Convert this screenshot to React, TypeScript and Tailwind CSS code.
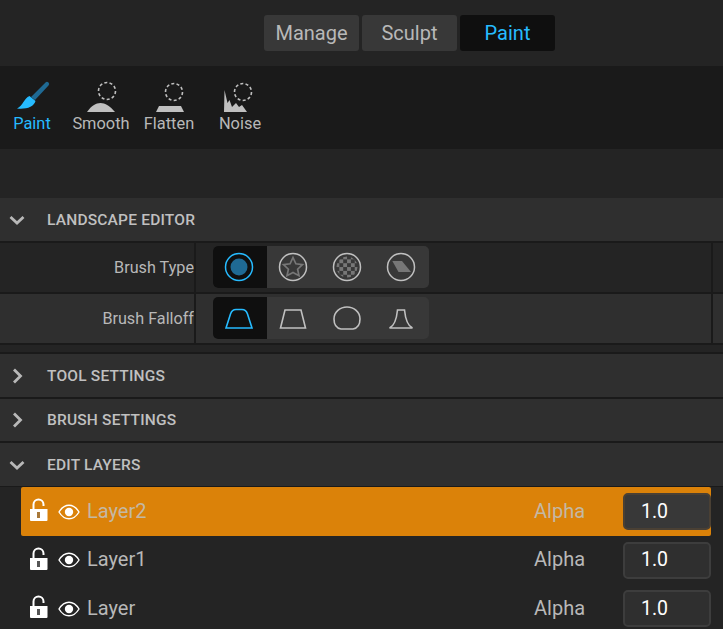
const FONT = "font-['Roboto',sans-serif]";

const Chevron = ({ open }: { open: boolean }) => (
  <svg width="16" height="16" viewBox="0 0 16 16" fill="none">
    <path
      d={open ? "M1.5 5 L8 11 L14.500 5" : "M5 1.500 L11.500 8 L5 14.500"}
      stroke="#b8b8b8"
      strokeWidth="2.8"
    />
  </svg>
);

const SectionHeader = ({ title, open, h }: { title: string; open: boolean; h: string }) => (
  <div className={`flex items-center bg-[#2f2f2f] pl-[9px] ${h}`}>
    <Chevron open={open} />
    <span className="ml-[22px] pt-[2px] text-[15.500px] font-medium tracking-[0.2px] text-[#c0c0c0]">{title}</span>
  </div>
);

const Dashed = ({ cx, cy }: { cx: number; cy: number }) => (
  <circle cx={cx} cy={cy} r="8.500" fill="none" stroke="#c0c0c0" strokeWidth="1.600" strokeDasharray="3 2.300" />
);

const ToolIcon = ({ name }: { name: string }) => {
  if (name === "Paint")
    return (
      <svg width="36" height="33" viewBox="0 0 36 33">
        <path d="M17 17 L31.500 2.500 A2 2 0 0 1 34.500 5.500 L21 20 Z" fill="#1f6a94" />
        <path d="M15.500 16 L21.500 21 C20 27 12 29.500 3 28.500 C9 26 10 18 15.500 16 Z" fill="#26bbff" />
      </svg>
    );
  if (name === "Smooth")
    return (
      <svg width="36" height="33" viewBox="0 0 36 33">
        <Dashed cx={24} cy={11} />
        <path d="M4 32 C8 26 13 23 17.500 23 C22 23 27 26 32 32 Z" fill="#c0c0c0" />
      </svg>
    );
  if (name === "Flatten")
    return (
      <svg width="36" height="33" viewBox="0 0 36 33">
        <Dashed cx={23} cy={12} />
        <path d="M8 26 H30 L33 32 H5 Z" fill="#c0c0c0" />
      </svg>
    );
  return (
    <svg width="36" height="33" viewBox="0 0 36 33">
      <Dashed cx={21} cy={12} />
      <path d="M2 32 L2.500 10 L5.500 23 L7.500 20 L10 27 L14 23 L17 27 L20 25 L25 32 Z" fill="#c0c0c0" />
    </svg>
  );
};

const tools = [
  { name: "Paint", w: "w-[64px]", active: true },
  { name: "Smooth", w: "w-[74px]", active: false },
  { name: "Flatten", w: "w-[62px]", active: false },
  { name: "Noise", w: "w-[80px]", active: false },
];

const Ring = ({ color, children }: { color: string; children?: React.ReactNode }) => (
  <svg width="30" height="30" viewBox="0 0 30 30" className="mr-[2px] mb-[1px]">
    <circle cx="15" cy="15" r="13.500" fill="none" stroke={color} strokeWidth="1.500" />
    {children}
  </svg>
);

const Checker = () => {
  const cells = [];
  for (let r = 0; r < 6; r++) {
    for (let c = 0; c < 6; c++) {
      if ((r + c) % 2 === 0) {
        cells.push(<rect key={`${r}-${c}`} x={3.500 + c * 3.850} y={3.500 + r * 3.850} width="3.850" height="3.850" fill="#777" />);
      }
    }
  }
  return (
    <>
      <clipPath id="chk">
        <circle cx="15" cy="15" r="10.500" />
      </clipPath>
      <g clipPath="url(#chk)">{cells}</g>
    </>
  );
};

const typeIcons = [
  <Ring color="#26bbff" key="a">
    <circle cx="15" cy="15" r="8.500" fill="#1f6a94" />
  </Ring>,
  <Ring color="#c0c0c0" key="b">
    <path
      d="M15 5.500 L17.900 11.800 L24.500 12.600 L19.600 17.200 L21 23.700 L15 20.400 L9 23.700 L10.400 17.200 L5.500 12.600 L12.100 11.800 Z"
      fill="none"
      stroke="#777"
      strokeWidth="1.700"
    />
  </Ring>,
  <Ring color="#c0c0c0" key="c">
    <Checker />
  </Ring>,
  <Ring color="#c0c0c0" key="d">
    <path d="M6.300 9 H16 L25 20 H12.500 Z" fill="#777" />
  </Ring>,
];

const falloffIcons = [
  { d: "M1 22 L5.500 8 Q7 3.500 11 3.500 H17 Q21 3.500 22.500 8 L27 22 Z", color: "#26bbff" },
  { d: "M1.500 22 L6 4 H22 L26.500 22 Z", color: "#c0c0c0" },
  { d: "M8 23 C3 22 1 18 1 13 C1 6 7 1 14 1 C21 1 27 6 27 13 C27 18 25 22 20 23 Z", color: "#c0c0c0" },
  { d: "M2.500 22 C7 20 9.500 14 10.500 4 H17.500 C18.500 14 21 20 25.500 22 Z", color: "#c0c0c0" },
];

const Segmented = ({ items }: { items: React.ReactNode[] }) => (
  <div className="mb-[1px] flex h-[42px] w-[216px] overflow-hidden rounded-[5px] bg-[#383838]">
    {items.map((item, i) => (
      <div key={i} className={`flex w-[54px] items-center justify-center ${i === 0 ? "bg-[#0f0f0f]" : ""}`}>
        {item}
      </div>
    ))}
  </div>
);

const PropRow = ({ label, bg, items }: { label: string; bg: string; items: React.ReactNode[] }) => (
  <div className={`flex h-[49px] ${bg}`}>
    <div className="flex w-[194px] items-center justify-end pt-[1px] text-[16.200px] text-[#b8b8b8]">{label}</div>
    <div className="w-[2px] bg-[#1a1a1a]" />
    <div className="flex w-[515px] items-center pl-[17px]">
      <Segmented items={items} />
    </div>
    <div className="w-[2px] bg-[#1a1a1a]" />
  </div>
);

const Lock = ({ hole }: { hole: string }) => (
  <svg width="20" height="24" viewBox="0 0 20 24" className="mb-[3px]">
    <path d="M4.500 11 V6.500 A5 5 0 0 1 14.500 6.500 V8" fill="none" stroke="#fff" strokeWidth="2" />
    <path d="M1 11 H18.500 V22 A1 1 0 0 1 17.500 23 H2 A1 1 0 0 1 1 22 Z" fill="#fff" />
    <rect x="8" y="14" width="3" height="6" fill={hole} />
  </svg>
);

const Eye = () => (
  <svg width="22" height="16" viewBox="0 0 22 16">
    <path
      d="M1 8 C4 3 7.500 1.200 11 1.200 C14.500 1.200 18 3 21 8 C18 13 14.500 14.800 11 14.800 C7.500 14.800 4 13 1 8 Z"
      fill="none"
      stroke="#fff"
      strokeWidth="1.400"
    />
    <circle cx="11" cy="8" r="4.200" fill="#fff" />
  </svg>
);

const LayerRow = ({ name, selected, h }: { name: string; selected?: boolean; h: string }) => (
  <div className={`ml-[21px] flex w-[690px] items-center ${h} ${selected ? "rounded-[2px] bg-[#db8209]" : ""}`}>
    <div className="ml-[8px] flex w-[20px] justify-center">
      <Lock hole={selected ? "#a8783a" : "#555"} />
    </div>
    <div className="ml-[9px]">
      <Eye />
    </div>
    <span className={`mb-[2px] ml-[7px] w-[447px] text-[20px] ${selected ? "text-[#c4b8a4]" : "text-[#b8b8b8]"}`}>
      {name}
    </span>
    <span className={`mb-[2px] w-[89px] text-[20px] ${selected ? "text-[#c4b8a4]" : "text-[#b8b8b8]"}`}>Alpha</span>
    <div
      className={`flex h-[37px] w-[88px] items-center rounded-[5px] border-2 pl-[16px] text-[19.500px] text-white ${
        selected ? "border-[#4a4034] bg-[#383838]" : "border-[#3d3d3d] bg-[#2f2f2f]"
      }`}
    >
      1.0
    </div>
  </div>
);

const modeTabs = ["Manage", "Sculpt", "Paint"];

export default function App() {
  return (
    <div className={`h-[629px] w-[723px] overflow-hidden bg-[#242424] ${FONT}`}>
      <div className="flex h-[66px] items-start gap-[3px] pl-[264px] pt-[15px]">
        {modeTabs.map((t) => (
          <div
            key={t}
            className={`flex h-[36px] w-[95px] items-center justify-center rounded-[3px] text-[20px] ${
              t === "Paint" ? "bg-[#0f0f0f] text-[#26bbff]" : "bg-[#383838] text-[#b8b8b8]"
            }`}
          >
            {t}
          </div>
        ))}
      </div>

      <div className="flex h-[83px] bg-[#1a1a1a]">
        {tools.map((t) => (
          <div key={t.name} className={`flex flex-col items-center pt-[14px] ${t.w}`}>
            <ToolIcon name={t.name} />
            <span className={`mt-[1px] text-[16.400px] leading-[20px] ${t.active ? "text-[#26bbff]" : "text-[#b8b8b8]"}`}>
              {t.name}
            </span>
          </div>
        ))}
      </div>

      <div className="h-[49px]" />

      <SectionHeader title="LANDSCAPE EDITOR" open h="h-[43px]" />
      <div className="h-[2px] bg-[#1a1a1a]" />
      <PropRow label="Brush Type" bg="bg-[#242424]" items={typeIcons} />
      <div className="h-[2px] bg-[#1a1a1a]" />
      <PropRow
        label="Brush Falloff"
        bg="bg-[#2f2f2f]"
        items={falloffIcons.map((f) => (
          <svg key={f.d} width="28" height="24" viewBox="0 0 28 24" className="mr-[2px]">
            <path d={f.d} fill="none" stroke={f.color} strokeWidth="1.600" />
          </svg>
        ))}
      />
      <div className="h-[2px] bg-[#1a1a1a]" />
      <div className="h-[7px]" />
      <div className="h-[2px] bg-[#1a1a1a]" />
      <SectionHeader title="TOOL SETTINGS" open={false} h="h-[43px]" />
      <div className="h-[2px] bg-[#1a1a1a]" />
      <SectionHeader title="BRUSH SETTINGS" open={false} h="h-[42px]" />
      <div className="h-[2px] bg-[#1a1a1a]" />
      <SectionHeader title="EDIT LAYERS" open h="h-[43px]" />
      <div className="h-[1px] bg-[#1a1a1a]" />

      <LayerRow name="Layer2" selected h="h-[49px]" />
      <LayerRow name="Layer1" h="h-[48px]" />
      <LayerRow name="Layer" h="h-[49px]" />
    </div>
  );
}
